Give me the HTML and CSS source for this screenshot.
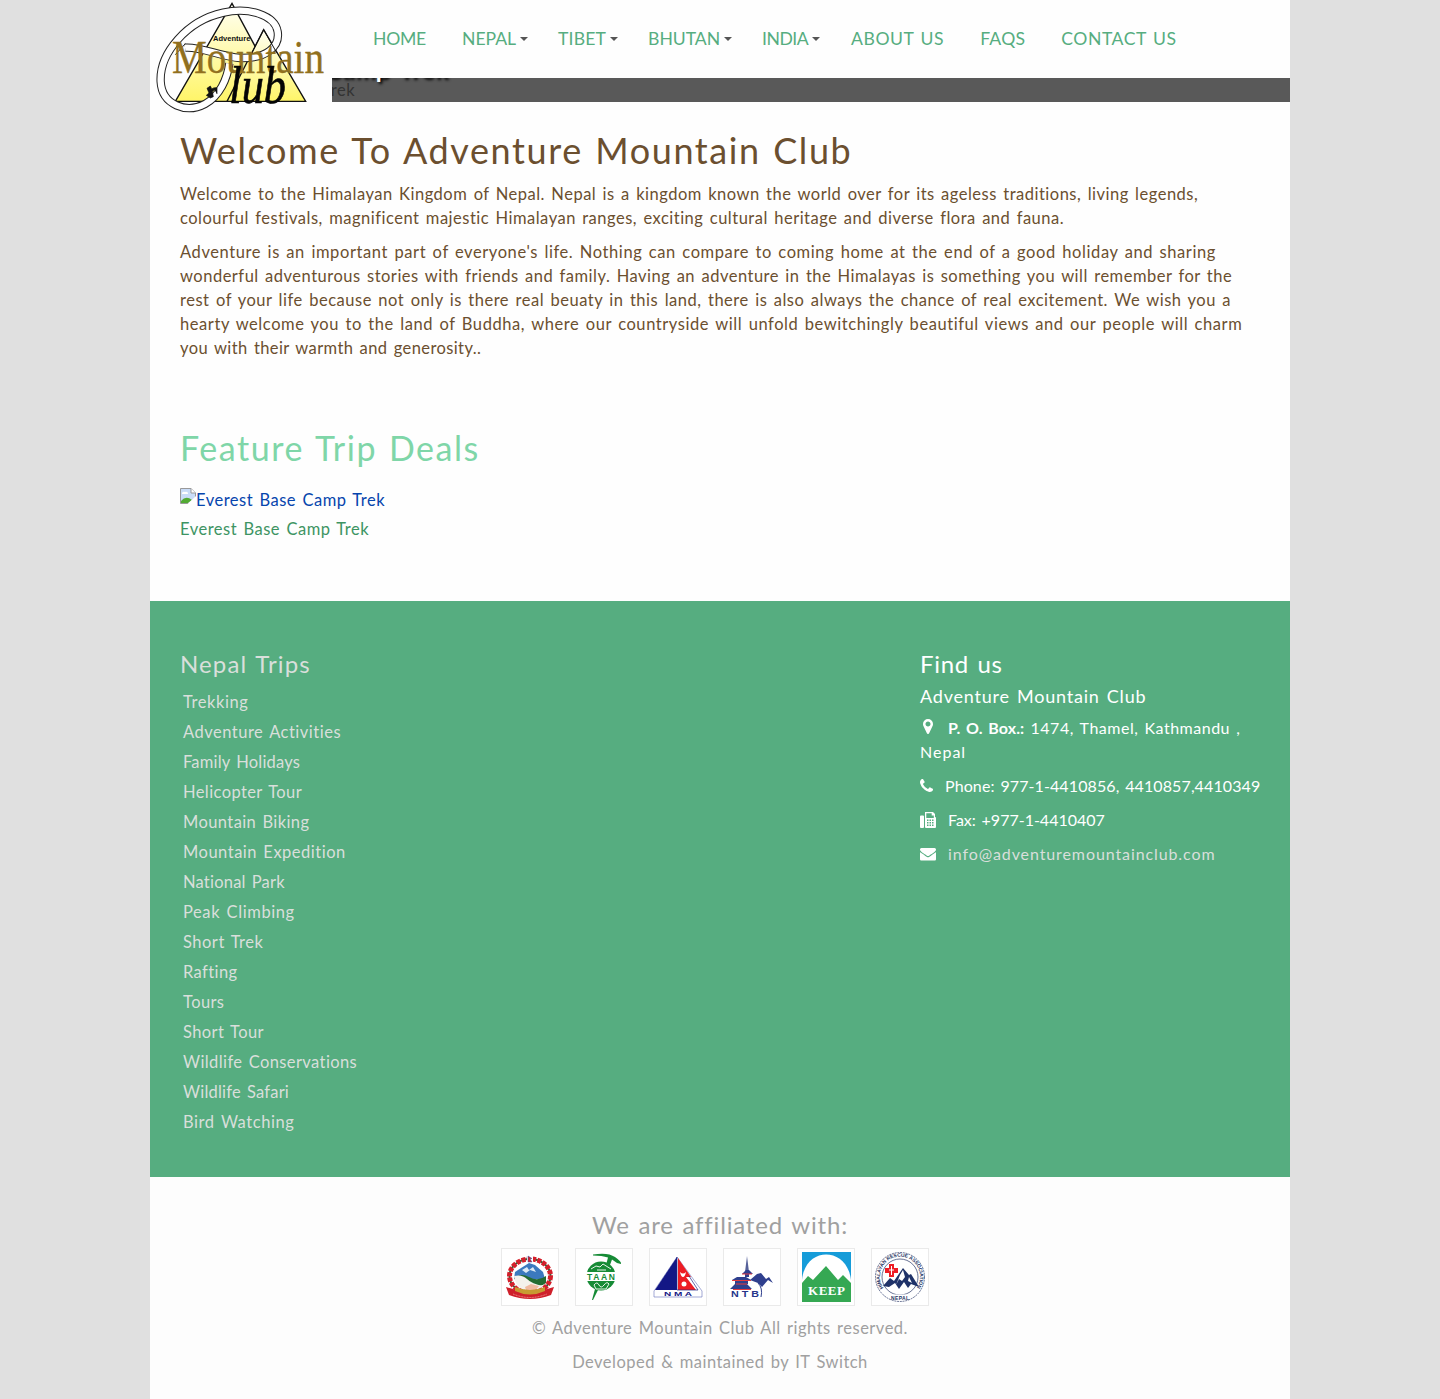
FILE: index.html
```
<!DOCTYPE html>
<html lang="en">
<head>
<meta charset="utf-8">
<title>Adventure Mountain Club</title>
<link rel="stylesheet" href="styles.css">
</head>
<body>
<div class="page">
  <header class="header">
    <a class="logo" href="#" aria-label="Adventure Mountain Club">
      <svg viewBox="0 0 546 351" width="182" height="117">
        <defs><linearGradient id="gold" x1="0" y1="0" x2="0" y2="1"><stop offset="0" stop-color="#fffff4"/><stop offset="1" stop-color="#fff568"/></linearGradient></defs>
        <path d="M246 10L76 304H404Z" fill="url(#gold)" stroke="#111" stroke-width="4"/>
        <path d="M341 89L231 304H467Z" fill="url(#gold)" stroke="#111" stroke-width="4"/>
        <path d="M105 143C150 138 210 170 270 174C350 176 390 140 383 95C375 45 295 20 220 38C110 62 28 160 32 245C36 316 110 341 165 312C210 287 232 235 238 190" fill="none" stroke="#222" stroke-width="25"/>
        <path d="M105 143C150 138 210 170 270 174C350 176 390 140 383 95C375 45 295 20 220 38C110 62 28 160 32 245C36 316 110 341 165 312C210 287 232 235 238 190" fill="none" stroke="#fff" stroke-width="19"/>
        <path d="M106 131L76 164" stroke="#222" stroke-width="3"/>
        <path d="M341 89L300 170M341 89L380 158" stroke="#111" stroke-width="3"/>
        <path d="M171 265l10-7 4 8 14-3-12 12 3 15-9 4-12-8 8-7zM190 264h11v18" fill="#111" stroke="#111" stroke-width="2"/>
        <text x="189" y="123" class="logo-small" textLength="112" lengthAdjust="spacingAndGlyphs">Adventure</text>
        <text x="66" y="220" class="logo-name" textLength="456" lengthAdjust="spacingAndGlyphs">Mountain</text>
        <text x="238" y="308" class="logo-club" textLength="170" lengthAdjust="spacingAndGlyphs">lub</text>
      </svg>
    </a>
    <nav class="nav">
      <a href="#" class="home">HOME</a>
      <a href="#" class="drop">NEPAL</a>
      <a href="#" class="drop tibet">TIBET</a>
      <a href="#" class="drop">BHUTAN</a>
      <a href="#" class="drop india">INDIA</a>
      <a href="#" class="wide">ABOUT US</a>
      <a href="#" class="faqs">FAQS</a>
      <a href="#" class="wide">CONTACT US</a>
    </nav>
  </header>
  <section class="banner">
    <div class="caption">
      <h3>Everest Base Camp Trek</h3>
      <p>Everest Base Camp Trek</p>
    </div>
  </section>
  <main class="content">
    <h1>Welcome To Adventure Mountain Club</h1>
    <p>Welcome to the Himalayan Kingdom of Nepal. Nepal is a kingdom known the world over for its ageless traditions, living legends,<br>
    colourful festivals, magnificent majestic Himalayan ranges, exciting cultural heritage and diverse flora and fauna.</p>
    <p><span class="loose">Adventure is an important part of everyone's life. Nothing can compare to coming home at the end of a good holiday and sharing</span><br>
    wonderful adventurous stories with friends and family. Having an adventure in the Himalayas is something you will remember for the<br>
    <span class="even">rest of your life because not only is there real beuaty in this land, there is also always the chance of real excitement. We wish you a</span><br>
    <span class="roomy">hearty welcome you to the land of Buddha, where our countryside will unfold bewitchingly beautiful views and our people will charm</span><br>
    <span class="snug">you with their warmth and generosity..</span></p>
    <h2>Feature Trip Deals</h2>
    <a class="trip-image" href="#"><svg width="16" height="16" viewBox="0 0 16 16"><path d="M.5.5H11L15.500 5V15.500H.5Z" fill="#c9dcf8" stroke="#999"/><path d="M2 6a2 2 0 0 1 3-2 2 2 0 0 1 3 2Z" fill="#fff"/><path d="M1 15V13Q6 7 12 12L8 15Z" fill="#52aa33"/><path d="M11 .5V5H15.500" fill="#fff" stroke="#999"/><path d="M7.500 16L16 8V16Z" fill="#fff"/></svg>Everest Base Camp Trek</a>
    <a class="trip-name" href="#">Everest Base Camp Trek</a>
  </main>
  <footer>
    <div class="footer-main">
      <section class="trips">
        <h4>Nepal Trips</h4>
        <ul>
          <li class="roomy"><a href="#">Trekking</a></li>
          <li><a href="#">Adventure Activities</a></li>
          <li class="tight"><a href="#">Family Holidays</a></li>
          <li class="snug"><a href="#">Helicopter Tour</a></li>
          <li class="snug"><a href="#">Mountain Biking</a></li>
          <li><a href="#">Mountain Expedition</a></li>
          <li class="tight"><a href="#">National Park</a></li>
          <li class="loose"><a href="#">Peak Climbing</a></li>
          <li><a href="#">Short Trek</a></li>
          <li class="snug"><a href="#">Rafting</a></li>
          <li class="snug"><a href="#">Tours</a></li>
          <li class="snug"><a href="#">Short Tour</a></li>
          <li class="snug"><a href="#">Wildlife Conservations</a></li>
          <li class="tight"><a href="#">Wildlife Safari</a></li>
          <li class="roomy"><a href="#">Bird Watching</a></li>
        </ul>
      </section>
      <address class="contact">
        <h4>Find us</h4>
        <h5>Adventure Mountain Club</h5>
        <p><svg class="icon pin" viewBox="0 128 1024 1536"><path d="M768 640q0-106-75-181t-181-75-181 75-75 181 75 181 181 75 181-75 75-181zm256 0q0 109-33 179l-364 774q-16 33-47.500 52t-67.500 19-67.500-19-46.500-52l-365-774q-33-70-33-179 0-212 150-362t362-150 362 150 150 362z"/></svg><b>P. O. Box.:</b> 1474, Thamel, Kathmandu ,<br><span class="nepal">Nepal</span></p>
        <p class="phone-line"><svg class="icon phone" viewBox="0 128 1408 1408"><path d="M1408 1240q0 27-10 70.500t-21 68.500q-21 50-122 106-94 51-186 51-27 0-52.500-3.500t-57.500-12.500-47.500-14.500-55.500-20.500-49-18q-98-35-175-83-128-79-264.500-215.500t-215.500-264.500q-48-77-83-175-3-9-18-49t-20.500-55.500-14.500-47.500-12.500-57.500-3.500-52.500q0-92 51-186 56-101 106-122 25-11 68.500-21t70.500-10q14 0 21 3 18 6 53 76 11 19 30 54t35 63.500 31 53.500q3 4 17.500 25t21.500 35.500 7 28.500q0 20-28.500 50t-62 55-62 53-28.500 46q0 9 5 22.500t8.500 20.500 14 24 11.500 19q76 137 174 235t235 174q2 1 19 11.500t24 14 20.500 8.500 22.500 5q18 0 46-28.500t53-62 55-62 50-28.500q14 0 28.500 7t35.500 21.500 25 17.500q25 15 53.500 31t63.500 35 54 30q70 35 76 53 3 7 3 21z"/></svg>Phone: 977-1-4410856, 4410857,4410349</p>
        <p class="fax-line"><svg class="icon fax" viewBox="0 0 16 16"><path fill-rule="evenodd" d="M1 3.500H3Q4 3.500 4 4.500V15Q4 16 3 16H1Q0 16 0 15V4.500Q0 3.500 1 3.500ZM5 0H13L15 2V5Q16 5 16 6V15Q16 16 15 16H6Q5 16 5 15ZM6.300 1.300V6H13.800V3.600H11.700V1.300ZM7 7.500V9H8.500V7.500ZM9.500 7.500V9H11V7.500ZM12 7.500V9H13.500V7.500ZM7 10V11.500H8.500V10ZM9.500 10V11.500H11V10ZM12 10V11.500H13.500V10ZM7 12.500V14H8.500V12.500ZM9.500 12.500V14H11V12.500ZM12 12.500V14H13.500V12.500Z"/></svg>Fax: +977-1-4410407</p>
        <p class="mail-line"><svg class="icon mail" viewBox="0 256 1792 1408"><path d="M1792 710v794q0 66-47 113t-113 47h-1472q-66 0-113-47t-47-113v-794q44 49 101 87 362 246 497 345 57 42 92.500 65.500t94.500 48 110 24.500h2q51 0 110-24.500t94.500-48 92.500-65.500q170-123 498-345 57-39 100-87zm0-294q0 79-49 151t-122 123q-376 261-468 325-10 7-42.500 31t-54 38.500-52 32.500-57.500 27-50 9h-2q-23 0-50-9t-57.500-27-52-32.500-54-38.500-42.500-31q-91-64-262-182.500t-205-142.500q-62-42-117-115.500t-55-136.500q0-78 41.500-130t118.500-52h1472q65 0 112.500 47t47.500 113z"/></svg><a href="#">info@adventuremountainclub.com</a></p>
      </address>
    </div>
    <div class="footer-end">
      <h4>We are affiliated with:</h4>
      <div class="badges">
        <span class="badge"><svg viewBox="0 0 50 50">
          <circle cx="25" cy="25" r="18" fill="#fff"/>
          <path d="M10 20Q19 14 24 11L30 13 38 20 40 27H9Z" fill="#3b79be"/>
          <path d="M17 18l5-3 2 3 4-3 3 5-6-2-4 3Z" fill="#dce9f5"/>
          <path d="M9 27Q15 20 24 25T41 24V31Q34 37 25 32Z" fill="#246b32"/>
          <path d="M9 24Q17 22 22 27T38 34L31 38H17Q10 33 9 24Z" fill="#f4f1ec"/>
          <path d="M20 35l6-3 8 2-3 4H21Z" fill="#f0b9a0"/>
          <ellipse cx="25" cy="24" rx="20.500" ry="17" fill="none" stroke="#32633a" stroke-width="2"/>
          <ellipse cx="25" cy="24" rx="20.500" ry="17" fill="none" stroke="#d51f2b" stroke-width="5" stroke-dasharray="4 1.300"/>
          <path d="M1 35L8 37Q25 47 42 37L49 35 46 43Q25 51 4 43Z" fill="#cf202b"/>
          <path d="M10 35Q25 41 40 35V39Q25 46 10 39Z" fill="#c79b32"/>
          <path d="M8 42Q25 49 42 42" fill="none" stroke="#f0a6a0" stroke-width=".8" stroke-dasharray="1 .6"/>
          <path d="M22 3h6v7h-6z" fill="#fff"/><path d="M23 4l4 2.500-2 .5 2 3h-4Z" fill="#d51f2b" stroke="#3553a0" stroke-width=".5"/>
        </svg></span>
        <span class="badge"><svg viewBox="0 0 50 50" fill="#168b36">
          <path d="M14 2.500Q29 0 36 5T42 12L38 11 33 7.500 31 13H27L29 5.500Q23 3.500 14 3.500Z"/>
          <circle cx="22" cy="24" r="14.500"/>
          <path d="M16 37l3 1-5 10h-1Z"/>
          <path d="M12 17l5-3 4 1 3-3 8 5M18 18h9M15 33q3-4 5 0t5 0 5-1l-3 5H17Z" fill="none" stroke="#fff" stroke-width=".9"/>
          <path d="M7 20H37V29H7Z" fill="#fff"/>
          <text x="8" y="27.500" class="taan" textLength="28">TAAN</text>
        </svg></span>
        <span class="badge"><svg viewBox="0 0 50 50">
          <path d="M24 5L1 39V45H49V39Z" fill="#fff" stroke="#6670b8" stroke-width=".6"/>
          <path d="M24 5L2 38H24Z" fill="#131785"/><path d="M25 6L38 25H33L43 38H25Z" fill="#ed1c24"/>
          <circle cx="31" cy="32" r="2.500" fill="#fff"/><path d="M27 20q3 3 6 0-1 5-3 5t-3-5Z" fill="#fff"/>
          <path d="M24 5V38H45L36 24" fill="none" stroke="#242783" stroke-width=".7"/>
          <text x="11" y="44" class="nma" textLength="28" lengthAdjust="spacingAndGlyphs">N M A</text>
        </svg></span>
        <span class="badge"><svg viewBox="0 0 50 50">
          <path d="M20 4L18 20H22Z" fill="#56619a"/><path d="M15 22L19 18H22L26 22H22V25H18V22Z" fill="#2f3f8e"/>
          <path d="M5 28L10 25H19L24 28Z" fill="#2f3f8e"/><path d="M5 28.500H24M6 37.500H24" stroke="#e43a3e" stroke-width="1.200"/>
          <path d="M8 29H21V32H20L25 37H3L8 32Z" fill="#2f3f8e"/>
          <path d="M15 22H25M9 32H20" stroke="#e43a3e"/>
          <path d="M23 28L30 22 34 21 39 27 42 25 46 31 41 28 35 35 31 31Z" fill="#2f3f8e"/>
          <path d="M31 31Q36 36 34 45" fill="none" stroke="#2f3f8e"/>
          <text x="4" y="45" class="ntb" textLength="28" lengthAdjust="spacingAndGlyphs">N T B</text>
        </svg></span>
        <span class="badge"><svg viewBox="0 0 50 50">
          <path d="M1 0H50V50H1Z" fill="#169cd9"/><path d="M1 28C4-6 46-6 50 28V50H1Z" fill="#fff"/>
          <path d="M1 31L7 24 12 28 25 14 37 28 42 23 50 31V50H1Z" fill="#35a853"/>
          <text x="7" y="43" class="keep" textLength="37">KEEP</text>
        </svg></span>
        <span class="badge"><svg viewBox="0 0 50 50">
          <defs><path id="arc-top" d="M8.500 36A20 20 0 1 1 41.500 36"/></defs>
          <circle cx="25" cy="25" r="24.500" fill="#fff" stroke="#263565" stroke-width=".7" stroke-dasharray="2 .8"/>
          <circle cx="25" cy="25" r="18" fill="none" stroke="#263565" stroke-width=".7"/>
          <text class="rescue"><textPath href="#arc-top" textLength="86">HIMALAYAN RESCUE ASSOCIATION</textPath></text>
          <path d="M14 42.500H36V46H14Z" fill="#fff"/>
          <text class="rescue" x="16" y="47.500" textLength="18">NEPAL</text>
          <path d="M8 34L15 26 19 29 28 16 34 23 36 22 44 35 36 32 33 36 29 30 24 37 20 31 14 35Z" fill="#1f3268"/>
          <path d="M25 23L28 18 30 25 27 29 24 27 21 33ZM34 25l3 6-4-2Z" fill="#fff"/>
          <path d="M14 12H19V16H23V21H19V25H14V21H10V16H14Z" fill="#ed1c24"/><path d="M16.500 14V23M14 18h5" stroke="#fff"/>
        </svg></span>
      </div>
      <p>© Adventure Mountain Club All rights reserved.</p>
      <p class="credit">Developed &amp; maintained by IT Switch</p>
    </div>
  </footer>
</div>
</body>
</html>
```
FILE: styles.css
```
* { box-sizing: border-box; }
body { margin: 0; background: #e0e0e0; font: 16.5px/24px Lato, sans-serif; letter-spacing: .5px; word-spacing: .1em; white-space: nowrap; }
a { color: inherit; text-decoration: none; }
h1, h2, h3, h4, h5, p, ul { margin: 0; padding: 0; font-weight: 400; }
ul { list-style: none; }
.page { width: 1140px; margin: 0 auto; background: #fefefe; }

.tight { letter-spacing: .21px; }
.snug { letter-spacing: .4px; }
.even { letter-spacing: .525px; }
.roomy { letter-spacing: .57px; }
.loose { letter-spacing: .59px; }

.header { position: relative; z-index: 2; display: flex; height: 78px; background: #fefefe; }
.logo { width: 182px; height: 117px; background: #fefefe; }
.logo svg { display: block; letter-spacing: 0; word-spacing: 0; }
.logo-small { font: bold 21px "Liberation Sans", sans-serif; fill: #111; }
.logo-name { font: 138px "Liberation Serif", serif; fill: #91701e; stroke: #91701e; stroke-width: 1; }
.logo-club { font: italic 156px "Liberation Serif", serif; fill: #050505; stroke: #050505; stroke-width: 2; }

.nav { display: flex; gap: 36px; padding-left: 41px; font-size: 17.6px; line-height: 78px; color: #56ad80; letter-spacing: -.04px; }
.nav a { height: 78px; }
.home { letter-spacing: -.25px; }
.tibet { letter-spacing: .15px; }
.india { letter-spacing: -.51px; }
.wide { letter-spacing: .53px; }
.faqs { letter-spacing: .25px; }
.drop { display: flex; align-items: center; margin-right: -6px; }
.drop + .wide { margin-left: 1px; }
.drop::after { content: ""; margin-left: 4px; border: 4px solid transparent; border-top-color: #555; border-bottom: 0; }

.banner { position: relative; height: 24px; overflow: hidden; background: #595959; }
.caption { position: absolute; left: 16px; bottom: 0; color: #333; }
.caption h3 { font-size: 24px; font-weight: 700; line-height: 18px; color: #fff; letter-spacing: 1px; text-shadow: 2px 2px 3px #000; }

.content { height: 499px; padding: 25px 30px 0; color: #6b4f2f; }
h1 { margin-bottom: 9px; font-size: 36px; line-height: 46px; letter-spacing: 1.6px; }
.content p { margin-bottom: 10px; }
h2 { margin: 68px 0 20px; font-size: 34px; line-height: 40px; letter-spacing: 1.55px; color: #7fd6a8; }
.trip-image { display: flex; height: 24px; color: #0645ad; }
.trip-name { display: block; margin-top: 5px; color: #3d9463; }

.footer-main { display: flex; justify-content: space-between; height: 576px; padding: 48px 30px 0; background: #56ad80; color: #fff; }
.footer-main h4 { font-size: 24px; line-height: 30px; letter-spacing: 1.1px; }
.trips { color: #d9dfdb; }
.trips ul { padding: 8px 0 0 3px; }
.trips li { line-height: 30px; }
.contact { width: 340px; font-size: 16px; font-style: normal; letter-spacing: .5px; }
.footer-main .contact h4 { letter-spacing: .7px; }
.contact h5 { margin: 5px 0 8px; font-size: 18px; line-height: 24px; letter-spacing: .8px; }
.contact p { margin-bottom: 10px; }
.contact a { color: #d9dfdb; }
.contact b { font-weight: 700; letter-spacing: .1px; }
.nepal { letter-spacing: 1px; }
.phone-line { letter-spacing: .1px; }
.fax-line { letter-spacing: 0; }
.mail-line { letter-spacing: .9px; }
.icon { width: 16px; height: 16px; margin-right: 12px; fill: #fff; vertical-align: -2px; }
.pin { height: 15px; vertical-align: 0; }
.phone { width: 13px; height: 13px; vertical-align: 0; }
.mail { height: 12.6px; vertical-align: -1px; }

.footer-end { height: 222px; padding-top: 33px; background: #fdfdfd; text-align: center; color: #a0a0a0; }
.footer-end h4 { font-size: 24px; line-height: 30px; letter-spacing: .84px; }
.badges { display: flex; justify-content: center; gap: 16px; padding: 8px 10px 10px 0; }
.badge { width: 58px; height: 58px; padding: 3px; border: 1px solid #eaeaea; background: #fff; }
.badge svg { display: block; width: 50px; height: 50px; letter-spacing: 0; word-spacing: 0; }
.credit { margin-top: 10px; letter-spacing: .47px; }
.taan { font: bold 8.5px "Liberation Sans", sans-serif; fill: #168b36; }
.nma { font: bold 6px "Liberation Sans", sans-serif; fill: #131785; }
.ntb { font: bold 8.5px "Liberation Sans", sans-serif; fill: #26378b; }
.keep { font: bold 13px "Liberation Serif", serif; fill: #fff; }
.rescue { font: bold 5px "Liberation Sans", sans-serif; fill: #263565; }
```
